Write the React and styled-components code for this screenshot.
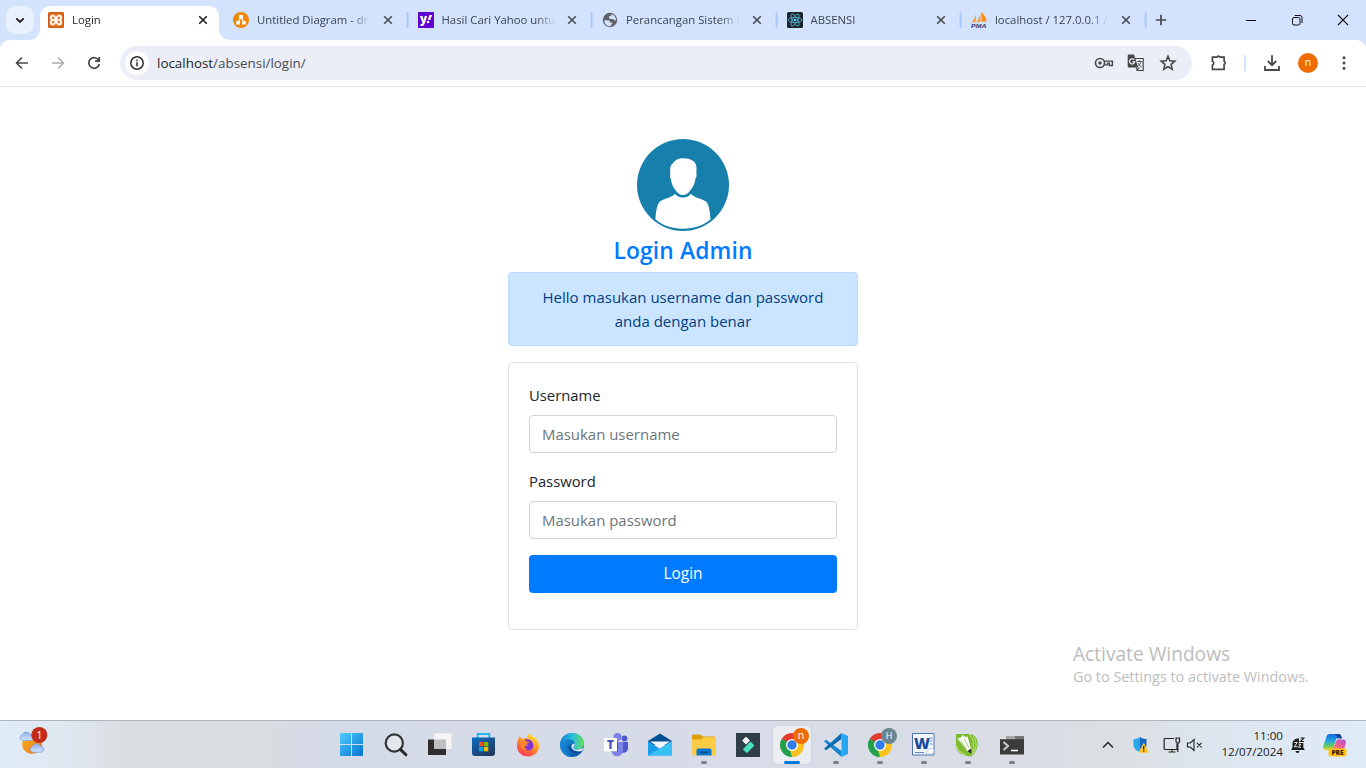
import React from 'react';
import styled, { createGlobalStyle } from 'styled-components';

const GlobalStyle = createGlobalStyle`
  *, *::before, *::after { box-sizing: border-box; }
  body {
    margin: 0;
    background: #fff;
    font-family: "Open Sans", "Noto Sans", sans-serif;
    color: #212529;
    overflow: hidden;
  }
  svg { display: block; flex: none; }
`;

/* ---------- layout ---------- */
const Screen = styled.div`
  width: 1366px;
  height: 768px;
  display: flex;
  flex-direction: column;
`;

const TabStrip = styled.div`
  height: 40px;
  flex: none;
  background: #d3e3fd;
  display: flex;
  align-items: center;
  padding-left: 6px;
`;

const TabSearch = styled.div`
  width: 28px;
  height: 28px;
  border-radius: 10px;
  background: #e9f1fe;
  display: grid;
  place-items: center;
  margin-right: 6px;
`;

const TabBox = styled.div`
  position: relative;
  width: ${p => (p.$active ? 179 : 184.5)}px;
  margin-right: ${p => (p.$active ? 6 : 0)}px;
  height: ${p => (p.$active ? 34 : 28)}px;
  align-self: ${p => (p.$active ? 'flex-end' : 'center')};
  flex: none;
  display: flex;
  align-items: center;
  padding: ${p => (p.$active ? '0 8px 6px' : '0 13.6px 0 8px')};
  background: ${p => (p.$active ? '#fff' : 'transparent')};
  border-radius: 10px 10px 0 0;

  &::before, &::after {
    content: "";
    display: ${p => (p.$active ? 'block' : 'none')};
    position: absolute;
    bottom: 0;
    width: 10px;
    height: 10px;
  }
  &::before {
    left: -10px;
    background: radial-gradient(circle at 0 0, transparent 9.5px, #fff 10px);
  }
  &::after {
    right: -10px;
    background: radial-gradient(circle at 100% 0, transparent 9.5px, #fff 10px);
  }
`;

const TabTitle = styled.span`
  margin-left: 8px;
  width: 115px;
  font-size: 11.35px;
  line-height: 16px;
  color: ${p => (p.$active ? '#1f1f1f' : '#3b4350')};
  white-space: nowrap;
  mask-image: linear-gradient(to right, #000 94px, transparent 114px);
`;

const TabClose = styled.span`
  display: grid;
  place-items: center;
  width: 16px;
  margin-left: auto;
`;

const TabDivider = styled.span`
  width: 2px;
  height: 16px;
  flex: none;
  margin: 0 -1px 0 -1px;
  background: #a8c7fa;
  border-radius: 1px;
  transform: translateX(-2.4px);
`;

const NewTab = styled.div`
  margin-left: 5px;
  width: 16px;
`;

const WindowControls = styled.div`
  margin-left: auto;
  display: flex;

  > * {
    width: 46px;
    height: 40px;
    display: grid;
    place-items: center;
  }
`;

const ToolbarBack = styled.div`
  background: #d3e3fd;
  flex: none;
`;

const Toolbar = styled.div`
  height: 47px;
  background: #fff;
  border-radius: 9px 9px 0 0;
  border-bottom: 1px solid #dfe0e2;
  display: flex;
  align-items: center;
`;

const NavButtons = styled.div`
  width: 120px;
  display: flex;
  gap: 16px;
  padding-left: 12px;
`;

const Omnibox = styled.div`
  width: 1072px;
  height: 34px;
  border-radius: 17px;
  background: #ebeef7;
  display: flex;
  align-items: center;
  padding: 0 14px 0 5px;
`;

const SiteInfo = styled.div`
  width: 24px;
  height: 24px;
  border-radius: 50%;
  background: #fff;
  display: grid;
  place-items: center;
`;

const Url = styled.div`
  margin-left: 8px;
  flex: 1;
  font-size: 13.4px;
  line-height: 20px;
  color: #474c55;

  b { font-weight: 400; color: #1f1f1f; }
`;

const OmniActions = styled.div`
  display: flex;
  gap: 12px;
`;

const ToolbarActions = styled.div`
  flex: 1;
  display: flex;
  align-items: center;
  padding-left: 17px;
`;

const ToolbarDivider = styled.span`
  width: 2px;
  height: 16px;
  background: #d3e3fd;
  margin: 0 16px 0 15px;
`;

const Profile = styled.span`
  width: 20px;
  height: 20px;
  border-radius: 50%;
  background: #ef6c00;
  color: #fff;
  font-size: 10.5px;
  line-height: 19px;
  text-align: center;
  margin: 0 16px;
`;

/* ---------- page ---------- */
const Page = styled.main`
  position: relative;
  flex: 1;
  background: #fff;
  display: flex;
  flex-direction: column;
  align-items: center;
  padding-top: 52px;
`;

const Title = styled.h4`
  margin: 6px 0 7px;
  font-size: 22.8px;
  line-height: 28px;
  font-weight: 600;
  letter-spacing: 0.15px;
  color: #007bff;
`;

const Alert = styled.div`
  width: 350px;
  padding: 12px 20px;
  border: 1px solid #b8daff;
  border-radius: 4px;
  background: #cce5ff;
  color: #004085;
  font-size: 15px;
  line-height: 24px;
  text-align: center;
  margin-bottom: 16px;
`;

const Card = styled.form`
  width: 350px;
  padding: 20px 20px 36px;
  border: 1px solid #dfdfdf;
  border-radius: 4px;
`;

const Field = styled.div`
  margin-bottom: 16px;
`;

const Label = styled.label`
  display: block;
  font-size: 14.8px;
  line-height: 24px;
  margin-bottom: 8px;
`;

const Input = styled.input`
  display: block;
  width: 100%;
  height: 38px;
  padding: 6px 12px;
  border: 1px solid #ced4da;
  border-radius: 4px;
  font: 14.95px/24px "Open Sans", sans-serif;
  color: #495057;
  &::placeholder { color: #6c757d; opacity: 1; }
`;

const Submit = styled.button`
  display: block;
  width: 100%;
  height: 38px;
  border: 0;
  border-radius: 4px;
  background: #007bff;
  color: #fff;
  font: 15.4px/24px "Open Sans", sans-serif;
`;

const Watermark = styled.div`
  position: absolute;
  left: 1073px;
  top: 554px;
  color: #bdbdbd;
  white-space: nowrap;
  font-size: 14.4px;
  line-height: 20px;

  strong {
    display: block;
    font-size: 19.15px;
    line-height: 26px;
    font-weight: 400;
  }
`;

/* ---------- taskbar ---------- */
const Taskbar = styled.footer`
  height: 48px;
  flex: none;
  border-top: 1px solid #b1b4ba;
  background: linear-gradient(to right, #dfebf6 0, #dfe9f2 60px, #dadee1 125px, #dadde0 250px, #d5dae7 320px, #d7dce8 800px, #dadde3 1050px, #dcdfe3 1120px, #dde7f1 1240px, #dfebf7 1366px);
  display: flex;
`;

const Widgets = styled.div`
  width: 330px;
  padding: 5px 0 0 18px;
`;

const Apps = styled.div`
  display: flex;
  align-items: center;
`;

const AppSlot = styled.div`
  width: 44px;
  height: 47px;
  display: flex;
  flex-direction: column;
  align-items: center;
  justify-content: center;
`;

const Tile = styled.div`
  position: relative;
  width: 38px;
  height: 38px;
  border-radius: 4px;
  background: ${p => (p.$active ? '#ecedf3' : 'transparent')};
  box-shadow: ${p => (p.$active ? '0 0 1px #9da3b0' : 'none')};
  display: grid;
  place-items: center;

  &::after {
    content: "";
    position: absolute;
    bottom: 0;
    left: 50%;
    transform: translateX(-50%);
    width: ${p => (p.$active ? 16 : 6)}px;
    height: 3px;
    border-radius: 2px;
    background: ${p => (p.$active ? '#0078d4' : p.$running ? '#7d7f85' : 'transparent')};
  }
`;

const Badge = styled.span`
  position: absolute;
  right: 2px;
  top: 2px;
  width: 16px;
  height: 16px;
  border-radius: 50%;
  background: ${p => p.$color};
  color: #fff;
  font-size: ${p => p.$size}px;
  line-height: 15px;
  text-align: center;
`;

const Tray = styled.div`
  margin-left: auto;
  padding-right: 18px;
  display: flex;
  align-items: center;
`;

const TrayItem = styled.span`
  margin-right: ${p => p.$gap || 0}px;
`;

const Clock = styled.div`
  width: 78px;
  text-align: right;
  font-size: 11.6px;
  line-height: 16px;
  color: #1b1b1b;
  padding-bottom: 1px;
  margin-right: 6px;
`;

/* ---------- icons ---------- */
const Line = ({ d, size = 20, box = 20, w = 1.6, color = '#45474a', children }) => (
  <svg width={size} height={size} viewBox={`0 0 ${box} ${box}`} fill="none" stroke={color} strokeWidth={w}>
    {d && <path d={d} />}
    {children}
  </svg>
);

const Cross = ({ color }) => <Line size={16} box={16} w={1.6} color={color} d="M4.2 4.2l7.6 7.6M11.8 4.2l-7.6 7.6" />;

const XamppIcon = () => (
  <svg width="16" height="16" viewBox="0 0 16 16">
    <rect width="16" height="16" rx="1.5" fill="#e8701f" />
    <rect x=".5" y=".5" width="15" height="15" rx="1" fill="none" stroke="#c25a18" />
    <path d="M4.800 7.900C2.200 7.500 2.300 3.600 4.900 3.600S7.300 6.400 8 8c.7 1.600.5 4.400 3.100 4.400s2.700-3.900.1-4.400c2.600-.5 2.500-4.400-.1-4.400S8.700 6.400 8 8c-.7 1.600-.5 4.400-3.100 4.400S2.200 8.500 4.800 7.900h6" fill="none" stroke="#fff" strokeWidth="1.800" />
  </svg>
);

const DrawioIcon = () => (
  <svg width="16" height="16" viewBox="0 0 16 16">
    <circle cx="8" cy="8" r="8" fill="#f08705" />
    <path d="M8 5l-3 5.5M8 5l3 5.5" stroke="#fff" strokeWidth="1.2" />
    <path d="M6 3h4v3.6H6zM3.2 9h3.6v3.4H3.2zM9.2 9h3.6v3.4H9.2z" fill="#fff" />
  </svg>
);

const YahooIcon = () => (
  <svg width="16" height="16" viewBox="0 0 16 16">
    <path d="M0 0h16v16H0z" fill="#6001d2" />
    <text x="2.1" y="11" fontSize="11.5" fontWeight="800" fill="#fff" fontFamily="Open Sans">y</text>
    <path d="M11.400 3h2.800l-2 4.900H9.800z" fill="#fff" />
    <circle cx="10" cy="10" r="1.300" fill="#fff" />
  </svg>
);

const GlobeIcon = () => (
  <svg width="16" height="16" viewBox="0 0 16 16">
    <circle cx="8" cy="8" r="7.200" fill="#5f6368" />
    <path d="M2.300 8.200h3.200c1.800 0 2.600.8 2.400 2.200h2.300v1.400l-1.500 1.400v1c-3.600.3-6.400-2.300-6.400-6zM9.500 1.900c3 .9 4.700 3.400 4.500 6.600l-1.500-.2-1.500-1.200H8.200L7 6.100l.3-2.200 2.200-.4z" fill="#d3e3fd" />
  </svg>
);

const ReactIcon = () => (
  <svg width="16" height="16" viewBox="0 0 16 16">
    <rect width="16" height="16" rx="1.5" fill="#20232a" />
    <g fill="none" stroke="#53b5cf" strokeWidth=".85">
      <ellipse cx="8" cy="8" rx="6.800" ry="2.600" />
      <ellipse cx="8" cy="8" rx="6.800" ry="2.600" transform="rotate(60 8 8)" />
      <ellipse cx="8" cy="8" rx="6.800" ry="2.600" transform="rotate(120 8 8)" />
    </g>
    <circle cx="8" cy="8" r="1.300" fill="#61dafb" />
  </svg>
);

const PmaIcon = () => (
  <svg width="16" height="16" viewBox="0 0 16 16">
    <path d="M5 2L4.700 10.300.4 10.600C2.500 8 4 5.500 5 2zM9.300 0l.3 9.800-4.500.5C7.700 7 9 4 9.300 0z" fill="#f9a13a" />
    <path d="M10.300.2c3.400 2.600 5.200 5.800 5.200 9.200l-4.900.4z" fill="#f78f1e" />
    <text x="0" y="15.600" fontSize="6.200" fontWeight="800" fontStyle="italic" fill="#3c3c76" fontFamily="Liberation Sans" textLength="15.500" lengthAdjust="spacingAndGlyphs">PMA</text>
  </svg>
);

const KeyIcon = () => (
  <Line w={1.6}>
    <circle cx="6" cy="10" r="4.500" />
    <path d="M10.200 8.100H18.400v4.400h-3v-2.400h-1.800v1.800h-3.400" strokeWidth="1.400" />
    <circle cx="6" cy="10" r="1.700" fill="#45474a" stroke="none" />
  </Line>
);

const TranslateIcon = () => (
  <svg width="20" height="20" viewBox="0 0 20 20">
    <path d="M3 1.600h5l4.200 13H3A1.300 1.300 0 0 1 1.700 13.300V3A1.300 1.300 0 0 1 3 1.600z" fill="#45474a" />
    <path d="M9 5.500h8.200v12h-6l2-3M10.300 14.600l1 3" fill="none" stroke="#45474a" strokeWidth="1.200" />
    <path d="M8.200 6.700a2.600 2.600 0 1 0 .5 2.200H6.500" fill="none" stroke="#fff" strokeWidth="1.100" />
    <path d="M11 8.500h5.200M13.500 7.300v1.200M15 8.500c-.4 2.300-1.800 4-3.500 5M12 10c.8 1.800 2 3 3.800 4" fill="none" stroke="#45474a" strokeWidth=".9" />
  </svg>
);

const Avatar = () => (
  <svg width="92" height="92" viewBox="0 0 92 92">
    <circle cx="46" cy="46" r="46" fill="#167fac" />
    <path d="M44.700 19.300C50 19 53 20 54.700 21.300 58.500 22.300 60.500 27 59.300 34.500 60 36.500 59.300 38.500 58.500 39.600 58 43.500 56.500 47.500 54 50.600 51.500 54.500 49 56.100 46 56.100S40.500 54.500 38 50.600C35.500 47.500 34.300 43.500 33.800 39.800 32.900 38.500 32.700 37 33.400 35.500 32.800 30 33 26 36 24.200 37.500 21.500 41 19.400 44.700 19.300z" fill="#fff" />
    <path d="M38 54.700C39.500 57 42.500 58.500 46 58.500S52.500 57 54 54.700C57.500 58.800 64 59.300 69 62.500 72 65 73 73 73.500 80.300 67 86.500 57 89.700 46 89.700S25 86.500 18.500 80.300C18.800 73 20 65 23 62.500 27.500 59.300 34 58.800 38 54.700z" fill="#fff" />
  </svg>
);

const Cloud = ({ x, y }) => (
  <path transform={`translate(${x} ${y})`} d="M3 9a3 3 0 0 1-.2-5.800A4.300 4.300 0 0 1 10.700 3a3 3 0 0 1 .8 6z" fill="url(#cloud)" stroke="#7f9fe2" strokeWidth=".7" />
);

const WeatherIcon = () => (
  <svg width="32" height="32" viewBox="0 0 32 32">
    <defs>
      <linearGradient id="sun" x2="1" y2="1"><stop stopColor="#f8b62c" /><stop offset="1" stopColor="#f0700f" /></linearGradient>
      <linearGradient id="cloud" x2="0" y2="1"><stop stopColor="#8bacea" /><stop offset="1" stopColor="#d5e3fa" /></linearGradient>
    </defs>
    <circle cx="14" cy="18" r="10" fill="url(#sun)" />
    <Cloud x="1.500" y="5.500" />
    <Cloud x="11.700" y="17.200" />
    <circle cx="21.300" cy="9" r="8" fill="#c42b1c" />
    <text x="21.500" y="13" fontSize="11" fill="#fff" textAnchor="middle" fontFamily="Open Sans">1</text>
  </svg>
);

const Ico = ({ children }) => <svg width="26" height="26" viewBox="0 0 26 26">{children}</svg>;

const WindowsIcon = () => (
  <Ico>
    <defs><linearGradient id="win" gradientUnits="userSpaceOnUse" x1="2" y1="2" x2="24" y2="24"><stop stopColor="#4cc9fb" /><stop offset="1" stopColor="#0473cf" /></linearGradient></defs>
    <path d="M1 2a1 1 0 0 1 1-1H12v11H1zM13 1h10a1 1 0 0 1 1 1v10h-11zM1 13h11v11H2a1 1 0 0 1-1-1zM13 13h11v10a1 1 0 0 1-1 1H13z" fill="url(#win)" />
  </Ico>
);

const SearchIcon = () => (
  <Ico>
    <circle cx="11.300" cy="11" r="8.600" fill="#e3e6ed" stroke="#303236" strokeWidth="2.200" />
    <path d="M17.700 17.600l5.200 5.200" stroke="#242629" strokeWidth="3" strokeLinecap="round" />
  </Ico>
);

const TaskViewIcon = () => (
  <Ico>
    <path d="M1 7.500h18v15.500H1z" fill="#2d2d2d" />
    <path d="M7 1.500h17.500v15.500H7z" fill="#f5f5f5" />
    <path d="M7 7.500h12v9.500H7z" fill="#bfbfbf" />
  </Ico>
);

const StoreIcon = () => (
  <Ico>
    <defs><linearGradient id="store" x2=".7" y2="1"><stop stopColor="#0b6fc3" /><stop offset="1" stopColor="#203a63" /></linearGradient></defs>
    <path d="M6.700 6V2h11.600v4" fill="none" stroke="#20b8f2" strokeWidth="1.900" />
    <path d="M1 5.500h23V21a3 3 0 0 1-3 3H4a3 3 0 0 1-3-3z" fill="url(#store)" />
    <path d="M8 10h4.300v4.300H8z" fill="#f25022" /><path d="M13 10h4.300v4.300H13z" fill="#7fba00" />
    <path d="M8 15h4.300v4.300H8z" fill="#00a4ef" /><path d="M13 15h4.300v4.300H13z" fill="#ffb900" />
  </Ico>
);

const FirefoxIcon = () => (
  <Ico>
    <defs><linearGradient id="fx" x1=".8" x2=".2" y2="1"><stop stopColor="#fff04a" /><stop offset=".45" stopColor="#ff9a28" /><stop offset="1" stopColor="#ff2e55" /></linearGradient></defs>
    <path d="M4.400 4.300l3 3C9 6 10.500 5.700 12 6 12.300 3.500 13.500 2 15 .8c.5 2.700 2.500 3.500 4 5.200l.6-1.500c3 3 4.800 6.500 4.400 10.500C23.400 20.500 19 24.500 13 24.500S2 20 2 14C1.900 10.300 3 7.300 4.400 4.300z" fill="url(#fx)" />
    <path d="M10 7.500c3.500-1 8 1 8.300 5.500.3 4-3 6-5.800 5.500-3.400-.5-4-3.500-2.500-4.500 1.300-.6 2.500 0 3.500-.8L9.800 11.700z" fill="#8137d6" />
    <path d="M6.500 9c2-1.500 4-1 5 .5 1.500.2 2.300.4 2.500 1-1 1.500-3 1-4 2.500-1 2 .5 4 2.500 4.500-4 1-7-1.500-7-5z" fill="#ff8624" />
  </Ico>
);

const EdgeIcon = () => (
  <Ico>
    <defs>
      <linearGradient id="eg1"><stop stopColor="#1785d8" /><stop offset=".55" stopColor="#2cc0d8" /><stop offset="1" stopColor="#68df55" /></linearGradient>
      <linearGradient id="eg2" x2="1" y2="1"><stop stopColor="#1b9de2" /><stop offset="1" stopColor="#0c4a9c" /></linearGradient>
    </defs>
    <circle cx="13" cy="13" r="12" fill="url(#eg2)" />
    <path d="M1.300 11C2.400 4.800 7 1 13 1c7 0 12 4.800 12 10.500 0 3.500-2.700 6-6 6-3 0-4.500-1-4.500-2s1.300-1.300 1.300-3.300c0-2.400-2.200-4.600-5.600-4.600-4 0-7.500 1.700-8.900 3.400z" fill="url(#eg1)" />
    <path d="M1.300 11c2.700-3.300 6-3.700 8.300-3-3 1.700-4 4.500-3.600 8 .5 4 3.700 7.500 7 9C6 25.500.5 19 1.300 11z" fill="#1684d5" />
    <path d="M12 11.500c-1.600 2-.8 5.500 2.400 7 3 1.300 6.200.8 9-.7l-.5 2C19.500 22 11 22 9.500 16c-.3-2 .7-4 2.500-4.500z" fill="#0b4b9c" />
    <path d="M15.300 11.400c1 1.800-.8 2.700-.8 4 0 1.500 2 2.300 4.500 2.200 2-.1 4-.7 5.500-2.500-.3 1.600-.8 3-1.500 4-5 1.400-10-.5-10.500-4.500-.1-1.700 1.200-3 2.800-3.200z" fill="#dce5ee" />
  </Ico>
);

const TeamsIcon = () => (
  <Ico>
    <circle cx="21.500" cy="6.500" r="2.900" fill="#5059c9" /><circle cx="14.500" cy="5" r="4" fill="#7b83eb" />
    <path d="M16 10h9v7a4.500 4.500 0 0 1-7 3z" fill="#5059c9" />
    <path d="M8 10h12v8a5.700 5.700 0 0 1-11.500 1z" fill="#7b83eb" />
    <path d="M8 9h7v11H8z" fill="#4a50b5" /><path d="M1 6h13v13.500H1z" fill="#fff" />
    <text x="7.500" y="17" fontSize="11.500" fontWeight="800" fill="#4b53bc" textAnchor="middle" fontFamily="Open Sans">T</text>
  </Ico>
);

const MailIcon = () => (
  <Ico>
    <path d="M1 9L13 1.500 25 9v4H1z" fill="#064f91" />
    <path d="M1 9l12 8 12-8v14.500H1z" fill="#1b9de9" /><path d="M1 23.500L25 9v14.500z" fill="#38c1f4" />
    <path d="M3 9.500h20l-10 6.500z" fill="#f2f5fa" />
  </Ico>
);

const FolderIcon = () => (
  <Ico>
    <path d="M1 4a1.500 1.500 0 0 1 1.500-1.500h7l2 2H23A1.500 1.500 0 0 1 24.500 6v5H1z" fill="#dda00a" />
    <path d="M1 7.500h9l2.500-2.300H25V22a1.500 1.500 0 0 1-1.500 1.500H2.500A1.500 1.500 0 0 1 1 22z" fill="#fbcc45" />
    <path d="M5.500 23.500v-5a2 2 0 0 1 2-2h11a2 2 0 0 1 2 2v5z" fill="#0c75cd" /><path d="M9 20.500h8" stroke="#084b8c" strokeWidth="1.500" />
  </Ico>
);

const FilmoraIcon = () => (
  <Ico>
    <path d="M1 1h24v24H1z" fill="#2f3d46" />
    <path d="M11 4.700l3.900 3.900-3.900 3.900-3.900-3.900z" fill="#fff" />
    <path d="M15.500 9.500l4 4-7.700 7.700-4-4z" fill="#4be0bf" />
  </Ico>
);

const ChromeIcon = () => (
  <Ico>
    <path d="M13 13L2.600 7A12 12 0 0 1 23.400 7z" fill="#e33b2e" />
    <path d="M13 13L23.400 7A12 12 0 0 1 13 25z" fill="#fcc31e" />
    <path d="M13 13v12A12 12 0 0 1 2.600 7z" fill="#25a04a" />
    <path d="M2.600 7L7.800 16 9 10z" fill="#25a04a" /><path d="M13 7h10.400L17 11z" fill="#fcc31e" /><path d="M18.200 16L13 25l-2-7z" fill="#fcc31e" />
    <circle cx="13" cy="13" r="6" fill="#fff" /><circle cx="13" cy="13" r="4.700" fill="#2f7cec" />
  </Ico>
);

const CodeIcon = () => (
  <Ico>
    <path d="M1 9.300l2-1.600L18.500 19v6z" fill="#1287cf" />
    <path d="M1 16.700l2 1.600L18.500 7V1z" fill="#0c6bb0" />
    <path d="M18.500 1L25 4v18l-6.500 3z" fill="#27a6f2" />
  </Ico>
);

const WordIcon = () => (
  <Ico>
    <path d="M1.500 1.500h21.500v21.500H1.500z" fill="#f4f7fc" stroke="#4b72b4" />
    <path d="M19 6h2.500M19 9h2.500M19 12h2.500M4 20.500h9" stroke="#5e86c8" />
    <text x="11" y="17" fontSize="16.500" fontWeight="800" fill="#1c4c9f" textAnchor="middle" fontFamily="Open Sans" textLength="16" lengthAdjust="spacingAndGlyphs">W</text>
    <path d="M14.500 22l3.500-5.500 5.500 1-1.500 4.500z" fill="#fff" stroke="#9eb2d2" strokeWidth=".6" />
  </Ico>
);

const CorelIcon = () => (
  <Ico>
    <path d="M1 2h13c7 .5 9.500 6 8.500 12-.7 4.500-3 8-6.500 10.500C7.500 24 1 20.500 1 13z" fill="#7dbb2f" />
    <path d="M14.500 2c4.500 6 5 14 2 21M18.500 4c3.500 5.500 3 12.500-.5 18M1.500 14c1.500 4.500 5 7.500 10 9.500" fill="none" stroke="#b3dc72" strokeWidth="1.200" />
    <path d="M2.500 6.500L6 5.500 7.500 3l2.500 2 2.500-.5 3.500 12-3.500 2.800z" fill="#fff" />
    <path d="M5.500 8.500l6.500 9M9.500 7l4.500 9" stroke="#a9c780" strokeWidth="1" />
    <path d="M12.500 19.300l3.500-2.800.8 5.500z" fill="#2e3527" />
  </Ico>
);

const TerminalIcon = () => (
  <Ico>
    <path d="M1 4h24v18.500H1z" fill="#3b3b3b" /><path d="M1 4h6.500v3.200H1z" fill="#dedede" /><path d="M7.500 4h9v3.200h-9z" fill="#a8a8a8" /><path d="M16.500 4H25v3.200h-8.500z" fill="#777" />
    <path d="M4.500 10l4.500 4-4.500 4" stroke="#c5c5c5" strokeWidth="2.200" fill="none" /><path d="M12 18.500h7" stroke="#fff" strokeWidth="1.600" />
  </Ico>
);

const ShieldIcon = () => (
  <svg width="18" height="18" viewBox="0 0 18 18">
    <path d="M8 1c2 1.500 4 2 6.500 2v5.500c0 4-3 6.500-6.500 7.500z" fill="#1567c4" />
    <path d="M8 1C6 2.500 4 3 1.500 3v5.500c0 4 3 6.500 6.500 7.500z" fill="#2aa5ea" />
    <path d="M11.700 6.500L16.800 16.800H6.600z" fill="#ffc61e" /><path d="M11.700 10v3.600M11.700 14.500v1.300" stroke="#222" strokeWidth="1.300" />
  </svg>
);

const BellIcon = () => (
  <svg width="18" height="18" viewBox="0 0 18 18">
    <path d="M3.500 8A5 5 0 0 1 8.500 2.500H10V7h4.300v4.500l1.500 2.500H2l1.500-2.500z" fill="#1c1c1c" />
    <path d="M6.500 15h4a2 2 0 0 1-4 0z" fill="#1c1c1c" />
    <path d="M5.300 6.500h3l-3 4.200h3.200M9.500 8.200h2.300l-2.300 3h2.500" fill="none" stroke="#fff" strokeWidth=".9" />
    <path d="M11.500 2h3.300l-3.300 3.500h3.500" fill="none" stroke="#1c1c1c" strokeWidth="1.100" />
  </svg>
);

const CopilotIcon = () => (
  <svg width="26" height="26" viewBox="0 0 26 26">
    <defs>
      <linearGradient id="cp1" x2="0" y2="1"><stop stopColor="#1868e5" /><stop offset=".45" stopColor="#26a9df" /><stop offset=".75" stopColor="#65c95b" /><stop offset="1" stopColor="#ead32a" /></linearGradient>
      <linearGradient id="cp2" x1="1" x2="0" y2="1"><stop stopColor="#a44ee8" /><stop offset=".5" stopColor="#ed6095" /><stop offset="1" stopColor="#f9974a" /></linearGradient>
    </defs>
    <path d="M8 2h8c2.200 0 3 1.500 3.600 4h-3c-2 0-2.500 1-3.300 3.500l-2 6C10.500 17.700 9.500 18 7.500 18H4C1.500 18 .8 16 1.500 13.500l3-9C5.200 2.700 6 2 8 2z" fill="url(#cp1)" />
    <path d="M13 2h4c1.700 0 2.300 1.500 3 4.500h-4z" fill="#17489c" />
    <path d="M17 7.500h4c2.500 0 3.500 1.800 2.700 4.200l-2.200 7H10l3.800-9C14.400 8 15 7.500 17 7.500z" fill="url(#cp2)" />
    <rect x="6.500" y="16.500" width="18" height="8" rx="2" fill="#ffc414" />
    <text x="15.500" y="23" fontSize="6.600" fontWeight="800" fill="#2b2406" textAnchor="middle" fontFamily="Open Sans">PRE</text>
  </svg>
);

/* ---------- data ---------- */
const tabs = [
  { title: 'Login', Icon: XamppIcon, active: true },
  { title: 'Untitled Diagram - dr', Icon: DrawioIcon },
  { title: 'Hasil Cari Yahoo untu', Icon: YahooIcon },
  { title: 'Perancangan Sistem M', Icon: GlobeIcon },
  { title: 'ABSENSI', Icon: ReactIcon },
  { title: 'localhost / 127.0.0.1 /', Icon: PmaIcon },
];

const apps = [
  { Icon: WindowsIcon }, { Icon: SearchIcon }, { Icon: TaskViewIcon }, { Icon: StoreIcon },
  { Icon: FirefoxIcon }, { Icon: EdgeIcon }, { Icon: TeamsIcon }, { Icon: MailIcon },
  { Icon: FolderIcon, running: true }, { Icon: FilmoraIcon },
  { Icon: ChromeIcon, active: true, badge: 'n', color: '#ef6c00', size: 10.5 },
  { Icon: CodeIcon, running: true },
  { Icon: ChromeIcon, running: true, badge: 'H', color: '#6d858f', size: 9 },
  { Icon: WordIcon, running: true }, { Icon: CorelIcon, running: true }, { Icon: TerminalIcon, running: true },
];

export default function App() {
  return (
    <Screen>
      <GlobalStyle />
      <TabStrip>
        <TabSearch><Line size={12} box={12} w={1.8} color="#1f1f1f" d="M2.300 4.300L6 8l3.700-3.700" /></TabSearch>
        {tabs.map(({ title, Icon, active }, i) => (
          <React.Fragment key={title}>
            {i > 1 && <TabDivider />}
            <TabBox $active={active}>
              <Icon />
              <TabTitle $active={active}>{title}</TabTitle>
              <TabClose><Cross color={active ? '#1f1f1f' : '#474a4f'} /></TabClose>
            </TabBox>
          </React.Fragment>
        ))}
        <TabDivider />
        <NewTab><Line size={16} box={16} w={1.700} d="M8 2.800v10.400M2.800 8h10.400" /></NewTab>
        <WindowControls>
          <span><Line size={12} box={12} w={1} color="#111" d="M1 6.500h10" /></span>
          <span>
            <Line size={12} box={12} w={1} color="#111">
              <rect x="1.500" y="3.500" width="7.500" height="7.500" rx="1.500" /><path d="M3.700 1.500H9a2 2 0 0 1 2 2V9" />
            </Line>
          </span>
          <span><Line size={12} box={12} w={1.100} color="#111" d="M1 1l10 10M11 1L1 11" /></span>
        </WindowControls>
      </TabStrip>

      <ToolbarBack>
        <Toolbar>
          <NavButtons>
            <Line w={1.600} d="M16 10H4.800M10 4.500L4.500 10l5.500 5.500" />
            <Line w={1.500} color="#abadb0" d="M4 10h11.200M10 4.500l5.500 5.500-5.500 5.500" />
            <Line w={1.700} d="M14.800 7.500A5.300 5.300 0 1 0 15.300 11M15.300 4v4.200h-4.200" />
          </NavButtons>
          <Omnibox>
            <SiteInfo>
              <Line size={16} box={16} w={1.500} color="#2b2d30">
                <circle cx="8" cy="8" r="6.200" /><path d="M8 7.200v4M8 4.600v1.600" />
              </Line>
            </SiteInfo>
            <Url><b>localhost</b>/absensi/login/</Url>
            <OmniActions>
              <KeyIcon />
              <TranslateIcon />
              <Line w={1.600} d="M10 3.300l1.900 4.500 4.900.4-3.700 3.200 1.100 4.800-4.200-2.600-4.200 2.600 1.100-4.800-3.700-3.200 4.900-.4z" />
            </OmniActions>
          </Omnibox>
          <ToolbarActions>
            <Line w={1.700} d="M3.400 4.200h4.500a1.700 1.700 0 0 1 3.200 0h4v4a1.700 1.700 0 0 1 0 3.200v4.900H3.400v-4.200a2 2 0 0 0 0-3.800z" />
            <ToolbarDivider />
            <Line w={1.800} d="M10 2.300v9.500M5.800 8l4.200 4.200L14.200 8M3 13v4h14v-4" />
            <Profile>n</Profile>
            <svg width="20" height="20" viewBox="0 0 20 20" fill="#45474a">
              <circle cx="10" cy="4.700" r="1.500" /><circle cx="10" cy="10" r="1.500" /><circle cx="10" cy="15.300" r="1.500" />
            </svg>
          </ToolbarActions>
        </Toolbar>
      </ToolbarBack>

      <Page>
        <Avatar />
        <Title>Login Admin</Title>
        <Alert>Hello masukan username dan password<br />anda dengan benar</Alert>
        <Card>
          <Field>
            <Label htmlFor="username">Username</Label>
            <Input id="username" placeholder="Masukan username" />
          </Field>
          <Field>
            <Label htmlFor="password">Password</Label>
            <Input id="password" type="password" placeholder="Masukan password" />
          </Field>
          <Submit type="button">Login</Submit>
        </Card>
        <Watermark>
          <strong>Activate Windows</strong>
          Go to Settings to activate Windows.
        </Watermark>
      </Page>

      <Taskbar>
        <Widgets><WeatherIcon /></Widgets>
        <Apps>
          {apps.map(({ Icon, active, running, badge, color, size }, i) => (
            <AppSlot key={i}>
              <Tile $active={active} $running={running}>
                <Icon />
                {badge && <Badge $color={color} $size={size}>{badge}</Badge>}
              </Tile>
            </AppSlot>
          ))}
        </Apps>
        <Tray>
          <TrayItem $gap={17}><Line size={14} box={14} w={1.500} color="#222" d="M2 9.500l5-5 5 5" /></TrayItem>
          <TrayItem $gap={13}><ShieldIcon /></TrayItem>
          <TrayItem $gap={5}>
            <Line size={18} box={18} w={1.200} color="#222" d="M11 2.500H2.200a1 1 0 0 0-1 1v9a1 1 0 0 0 1 1H14V8M5.500 16h7M9 13.500V16M13 2h3.500v3.500L15.800 7h-2L13 5.500zM14.800 7v9" />
          </TrayItem>
          <TrayItem $gap={1}>
            <Line size={18} box={18} w={1.100} color="#222" d="M1.500 7h2.800L8 3.500v11L4.300 11H1.500zM11 6.800l4.600 4.600M15.600 6.800L11 11.400" />
          </TrayItem>
          <Clock>11:00<br />12/07/2024</Clock>
          <TrayItem $gap={15}><BellIcon /></TrayItem>
          <CopilotIcon />
        </Tray>
      </Taskbar>
    </Screen>
  );
}
